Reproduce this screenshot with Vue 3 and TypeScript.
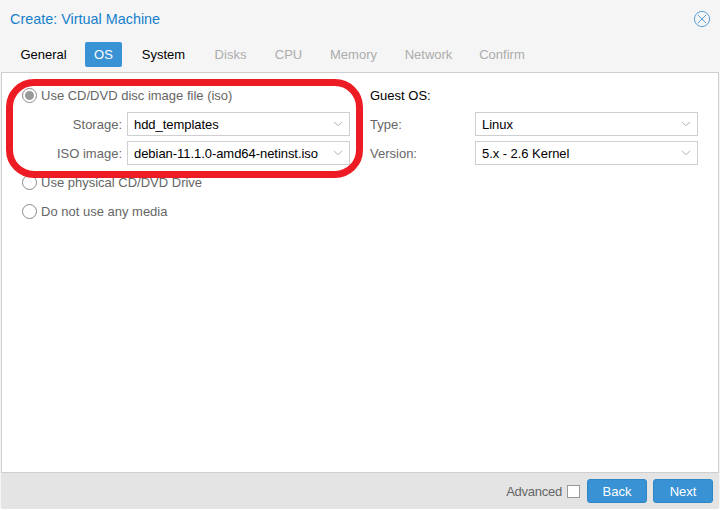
<template>
  <div class="window">
    <header class="title-bar">
      <span class="title">Create: Virtual Machine</span>
      <svg class="close" viewBox="0 0 18 18" width="18" height="18" aria-hidden="true">
        <circle cx="9" cy="9" r="7.6" />
        <path d="M4.8 4.8l8.400 8.400M13.200 4.800l-8.400 8.400" />
      </svg>
    </header>

    <nav class="tabs">
      <span
        v-for="tab in tabs"
        :key="tab.name"
        class="tab"
        :class="{ active: tab.name === 'OS', disabled: tab.disabled }"
      >{{ tab.name }}</span>
    </nav>

    <main class="panel">
      <section class="column left">
        <label class="radio first">
          <span class="dot checked"></span>
          <span>Use CD/DVD disc image file (iso)</span>
        </label>
        <div v-for="row in isoRows" :key="row.label" class="row">
          <span class="label right-label">{{ row.label }}</span>
          <div class="select">
            <span class="value">{{ row.value }}</span>
            <svg class="chevron" viewBox="0 0 10 6" width="10" height="6" aria-hidden="true">
              <path d="M1 .8L5 4.800 9 .8" />
            </svg>
          </div>
        </div>
        <label class="radio physical">
          <span class="dot"></span>
          <span>Use physical CD/DVD Drive</span>
        </label>
        <label class="radio none">
          <span class="dot"></span>
          <span>Do not use any media</span>
        </label>
      </section>

      <section class="column guest">
        <div class="guest-title">Guest OS:</div>
        <div v-for="row in guestRows" :key="row.label" class="row">
          <span class="label guest-label">{{ row.label }}</span>
          <div class="select">
            <span class="value">{{ row.value }}</span>
            <svg class="chevron" viewBox="0 0 10 6" width="10" height="6" aria-hidden="true">
              <path d="M1 .8L5 4.800 9 .8" />
            </svg>
          </div>
        </div>
      </section>

      <!-- annotation drawn over the screenshot -->
      <div class="highlight"></div>
    </main>

    <footer class="footer">
      <span class="advanced">Advanced</span>
      <span class="checkbox"></span>
      <button class="btn back" type="button">Back</button>
      <button class="btn" type="button">Next</button>
    </footer>
  </div>
</template>

<script setup lang="ts">
const tabs = [
  { name: 'General' },
  { name: 'OS' },
  { name: 'System' },
  { name: 'Disks', disabled: true },
  { name: 'CPU', disabled: true },
  { name: 'Memory', disabled: true },
  { name: 'Network', disabled: true },
  { name: 'Confirm', disabled: true }
]

const isoRows = [
  { label: 'Storage:', value: 'hdd_templates' },
  { label: 'ISO image:', value: 'debian-11.1.0-amd64-netinst.iso' }
]

const guestRows = [
  { label: 'Type:', value: 'Linux' },
  { label: 'Version:', value: '5.x - 2.6 Kernel' }
]
</script>

<style>
html,
body {
  margin: 0;
  background: #fff;
}
</style>

<style scoped>
.window {
  width: 720px;
  height: 509px;
  box-sizing: border-box;
  display: flex;
  flex-direction: column;
  background: #f5f5f5;
  border-radius: 3px;
  overflow: hidden;
  font-family: "Liberation Sans", Arial, sans-serif;
  font-size: 13px;
  color: #000;
}
.title-bar {
  height: 37px;
  flex: none;
  display: flex;
  align-items: center;
  justify-content: space-between;
  padding: 0 9px 0 10px;
}
.title {
  font-size: 14.4px;
  color: #157fcc;
}
.close {
  fill: none;
  stroke: #5b9fd8;
  stroke-width: 1;
}
.tabs {
  height: 24px;
  flex: none;
  margin-top: 5px;
  display: grid;
  grid-template-columns: 63px 37px 63px 51px 45px 65px 65px 62px;
  gap: 10px;
  padding-left: 12px;
}
.tab {
  line-height: 25px;
  text-align: center;
  border-radius: 2px;
}
.tab.active {
  background: #3892d4;
  color: #fff;
}
.tab.disabled {
  color: #acacac;
}
.panel {
  position: relative;
  flex: 1;
  display: flex;
  margin: 6px 1px 0 1px;
  padding: 0 20px;
  background: #fff;
  border: 1px solid #cfcfcf;
}
.column {
  display: flex;
  flex-direction: column;
}
.left {
  width: 328px;
}
.guest {
  margin-left: 20px;
  width: 328px;
}
.radio {
  display: flex;
  align-items: center;
  gap: 4px;
  height: 16px;
  color: #666;
}
.first {
  margin-top: 14px;
  margin-bottom: 9px;
}
.physical {
  margin-top: 9px;
}
.none {
  margin-top: 13px;
}
.dot {
  width: 15px;
  height: 15px;
  box-sizing: border-box;
  border: 1px solid #8a8a8a;
  border-radius: 50%;
  background: #fff;
  display: flex;
  align-items: center;
  justify-content: center;
}
.dot.checked::after {
  content: "";
  width: 9px;
  height: 9px;
  border-radius: 50%;
  background: #999;
}
.row {
  display: flex;
  align-items: center;
  height: 24px;
  margin-bottom: 5px;
}
.row:last-of-type {
  margin-bottom: 0;
}
.label {
  color: #666;
}
.right-label {
  width: 105px;
  padding-right: 5px;
  box-sizing: border-box;
  text-align: right;
}
.guest-title {
  margin-top: 15px;
  height: 16px;
  line-height: 16px;
  margin-bottom: 8px;
}
.guest-label {
  width: 105px;
}
.select {
  width: 223px;
  height: 24px;
  box-sizing: border-box;
  border: 1px solid #cfcfcf;
  background: #fff;
  display: flex;
  align-items: center;
  justify-content: space-between;
  padding: 0 6px;
}
.value {
  letter-spacing: -0.05px;
}
.chevron {
  fill: none;
  stroke: #b0b0b0;
  stroke-width: 1;
  margin-right: 0;
}
.highlight {
  position: absolute;
  left: 4px;
  top: 6px;
  width: 357px;
  height: 99px;
  box-sizing: border-box;
  border: 7px solid #ed1c24;
  border-radius: 28px;
  pointer-events: none;
}
.footer {
  height: 36px;
  flex: none;
  display: flex;
  align-items: center;
  justify-content: flex-end;
  margin: 0 1px;
  padding-right: 6px;
  background: #e4e4e4;
}
.advanced {
  color: #666;
  letter-spacing: -0.25px;
  margin-right: 5px;
}
.checkbox {
  width: 13px;
  height: 13px;
  box-sizing: border-box;
  border: 1px solid #999;
  background: #fff;
  margin-right: 7px;
}
.btn {
  width: 60px;
  height: 24px;
  padding: 0;
  border: 1px solid #2f86c6;
  border-radius: 3px;
  background: #3892d4;
  color: #fff;
  font: inherit;
}
.back {
  margin-right: 6px;
}
</style>
